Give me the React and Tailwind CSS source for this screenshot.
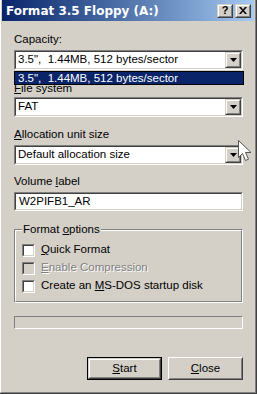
import React from "react";

const F = { fontFamily: "'Liberation Sans', Arial, sans-serif" };

function Sunken({ className = "", innerClass = "", children }) {
  return (
    <div className={"border border-t-[#808080] border-l-[#808080] border-b-white border-r-white " + className}>
      <div className={"border border-t-[#404040] border-l-[#404040] border-b-[#d4d0c8] border-r-[#d4d0c8] h-full " + innerClass}>
        {children}
      </div>
    </div>
  );
}

function Raised({ className = "", children }) {
  return (
    <div className={"border border-t-[#d4d0c8] border-l-[#d4d0c8] border-b-[#404040] border-r-[#404040] " + className}>
      <div className="border border-t-white border-l-white border-b-[#808080] border-r-[#808080] h-full bg-[#d4d0c8] flex items-center justify-center">
        {children}
      </div>
    </div>
  );
}

function Combo({ text }) {
  return (
    <Sunken className="h-[20px]" innerClass="bg-white flex items-center">
      <div className="flex-1 pl-[2px] text-[11.5px] text-black leading-none whitespace-pre">{text}</div>
      <Raised className="w-[16px] h-[16px]">
        <svg width="7" height="4" viewBox="0 0 7 4"><path d="M0 0h7L3.5 4z" fill="#000" /></svg>
      </Raised>
    </Sunken>
  );
}

function Check({ label, u, rest, disabled }) {
  return (
    <div className="flex items-center h-[18px]">
      <div className={"w-[13px] h-[13px] border border-t-[#808080] border-l-[#808080] border-b-white border-r-white"}>
        <div className={"w-full h-full border border-t-[#404040] border-l-[#404040] border-b-[#d4d0c8] border-r-[#d4d0c8] " + (disabled ? "bg-[#d4d0c8]" : "bg-white")}></div>
      </div>
      <div
        className={"ml-[6px] text-[11.5px] " + (disabled ? "text-[#808080] [text-shadow:1px_1px_0_#fff]" : "text-black")}
      >
        {label}<span className="underline">{u}</span>{rest}
      </div>
    </div>
  );
}

export default function App() {
  return (
    <div style={F} className="relative w-[257px] h-[394px] bg-[#d4d0c8] overflow-hidden border-r border-b border-r-[#404040] border-b-[#404040]">
      <div className="h-full border-l border-l-white border-r border-r-[#808080] border-b border-b-[#808080] flex flex-col">
        {/* title bar */}
        <div className="mx-[1px] h-[21px] bg-gradient-to-r from-[#0a246a] to-[#a6caf0] flex items-center pl-[4px] pr-[3px]">
          <div className="flex-1 text-white font-bold text-[12px] leading-none [font-family:'DejaVu_Sans',sans-serif]">Format 3.5 Floppy (A:)</div>
          <Raised className="w-[16px] h-[14px]">
            <span className="text-[11px] font-bold leading-none text-black">?</span>
          </Raised>
          <Raised className="w-[16px] h-[14px] ml-[2px]">
            <svg width="8" height="7" viewBox="0 0 8 7"><path d="M0 0h2l2 2.5L6 0h2L5 3.5 8 7H6L4 4.5 2 7H0l3-3.5z" fill="#000" /></svg>
          </Raised>
        </div>

        <div className="pl-[13px] pr-[12px] flex flex-col text-[11.5px] text-black">
          <div className="mt-[12px] h-[13px] leading-[13px]">Capacity:</div>
          <div className="mt-[4px] relative">
            <Combo text={'3.5",  1.44MB, 512 bytes/sector'} />
            <div className="absolute left-0 right-[-1px] top-[21px] h-[14px] bg-[#0a246a] border border-[#000000] text-white text-[11.5px] leading-[12px] pl-[3px] z-10 whitespace-pre">
              {'3.5",  1.44MB, 512 bytes/sector'}
            </div>
          </div>
          <div className="mt-[12px] h-[13px] leading-[13px]"><span className="underline">F</span>ile system</div>
          <div className="mt-[2px]"><Combo text="FAT" /></div>
          <div className="mt-[11px] h-[13px] leading-[13px]"><span className="underline">A</span>llocation unit size</div>
          <div className="mt-[4px]"><Combo text="Default allocation size" /></div>
          <div className="mt-[10px] h-[13px] leading-[13px]">Volume <span className="underline">l</span>abel</div>
          <div className="mt-[4px]">
            <Sunken className="h-[19px]" innerClass="bg-white flex items-center pl-[3px]">W2PIFB1_AR</Sunken>
          </div>

          {/* group box */}
          <div className="relative mt-[18px] border border-t-[#808080] border-l-[#808080] border-b-white border-r-white h-[74px]">
            <div className="h-full border border-t-white border-l-white border-b-[#808080] border-r-[#808080] pt-[10px] pl-[6px]">
              <Check label="" u="Q" rest="uick Format" />
              <Check label="" u="E" rest="nable Compression" disabled />
              <Check label="Create an " u="M" rest="S-DOS startup disk" />
            </div>
            <div className="absolute left-[7px] top-[-8px] bg-[#d4d0c8] px-[1px] leading-[14px]">
              Format <span className="underline">o</span>ptions
            </div>
          </div>

          {/* progress */}
          <div className="mt-[13px] h-[13px] border border-t-[#808080] border-l-[#808080] border-b-white border-r-white"></div>

          {/* buttons */}
          <div className="mt-[28px] flex justify-end gap-[6px]">
            <div className="w-[75px] h-[23px] border border-black">
              <Raised className="h-full">
                <span><span className="underline">S</span>tart</span>
              </Raised>
            </div>
            <div className="w-[75px] h-[23px] border border-t-white border-l-white border-b-[#404040] border-r-[#404040]">
              <div className="h-full border border-t-[#d4d0c8] border-l-[#d4d0c8] border-b-[#808080] border-r-[#808080] flex items-center justify-center">
                <span><span className="underline">C</span>lose</span>
              </div>
            </div>
          </div>
        </div>
      </div>

      {/* cursor */}
      <svg className="absolute left-[237px] top-[139px]" width="16" height="24" viewBox="0 0 16 24">
        <path d="M1.5 1.5v17l4-4 3 7 3-1.3-3-6.7h5.5z" fill="#fff" stroke="#555" strokeWidth="1" />
      </svg>
    </div>
  );
}
